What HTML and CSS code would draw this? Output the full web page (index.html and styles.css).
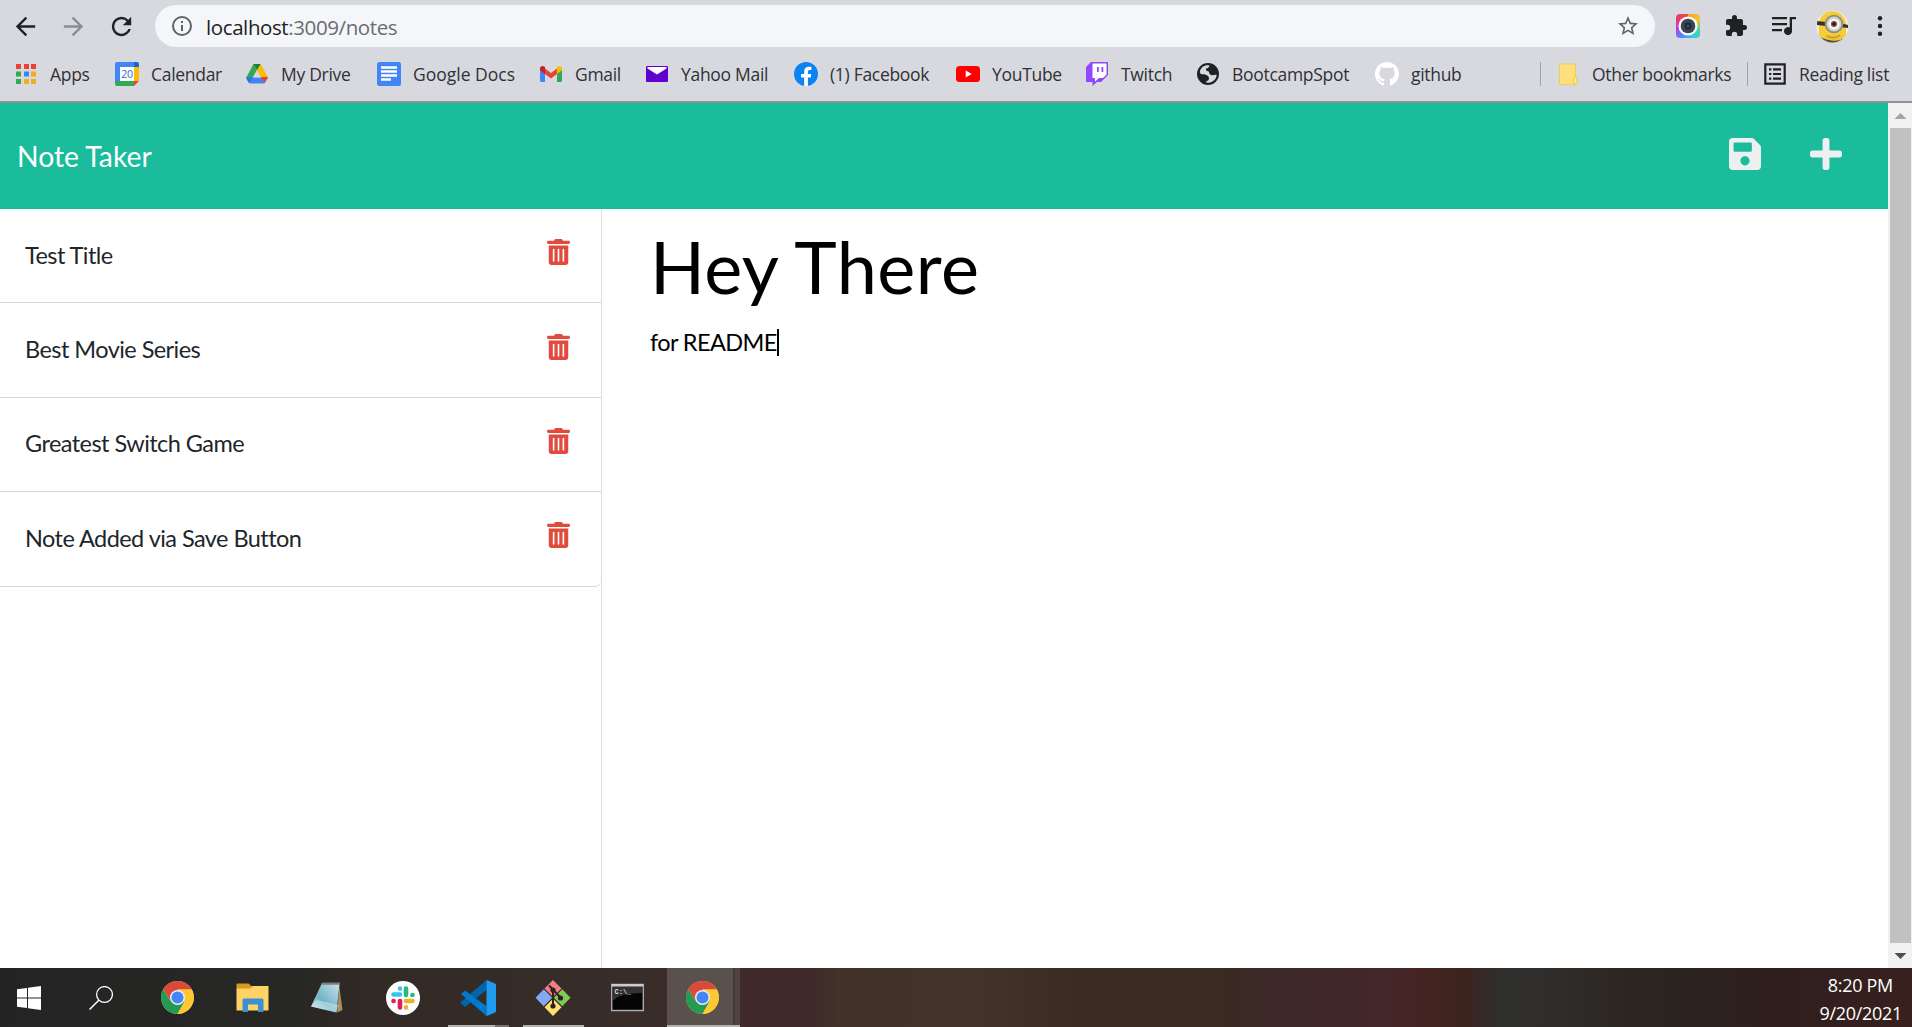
FILE: index.html
```html
<!DOCTYPE html>
<html lang="en">
<head>
<meta charset="utf-8">
<title>Note Taker</title>
<link rel="stylesheet" href="styles.css">
</head>
<body>
<svg class="defs" width="0" height="0">
  <symbol id="trash" viewBox="0 0 448 512"><path d="M32 464a48 48 0 0 0 48 48h288a48 48 0 0 0 48-48V128H32zm272-256a16 16 0 0 1 32 0v224a16 16 0 0 1-32 0zm-96 0a16 16 0 0 1 32 0v224a16 16 0 0 1-32 0zm-96 0a16 16 0 0 1 32 0v224a16 16 0 0 1-32 0zM432 32H312l-9.4-18.7A24 24 0 0 0 281.1 0H166.8a23.72 23.72 0 0 0-21.4 13.3L136 32H16A16 16 0 0 0 0 48v32a16 16 0 0 0 16 16h416a16 16 0 0 0 16-16V48a16 16 0 0 0-16-16z"/></symbol>
  <symbol id="chrome" viewBox="0 0 48 48">
    <circle cx="24" cy="24" r="24" fill="#fcc934"/>
    <path d="M24 12.5h20.9A24 24 0 0 0 3.2 12l10.8 17z" fill="#d9493c"/>
    <path d="M3.2 12A24 24 0 0 0 24 48L34.2 29.8 24 24 14 29.5z" fill="#249a54"/>
    <path d="M24 12.5h20.9A24 24 0 0 1 24 48l10.2-18.2z" fill="#fcc934"/>
    <circle cx="24" cy="24" r="11" fill="#e9edf2"/><circle cx="24" cy="24" r="8.7" fill="#4285f4"/>
  </symbol>
</svg>

<div class="toolbar">
  <svg class="nav" viewBox="0 0 24 24"><path d="M20 11H7.8l5.6-5.6L12 4l-8 8 8 8 1.4-1.4L7.8 13H20z"/></svg>
  <svg class="nav nav-off" viewBox="0 0 24 24"><path d="m12 4-1.4 1.4 5.6 5.6H4v2h12.2l-5.6 5.6L12 20l8-8z"/></svg>
  <svg class="nav" viewBox="0 0 24 24"><path d="M17.65 6.35A7.96 7.96 0 0 0 12 4a8 8 0 1 0 7.73 10h-2.08A6 6 0 1 1 12 6c1.66 0 3.14.69 4.22 1.78L13 11h7V4z"/></svg>
  <div class="omnibox">
    <svg class="info" viewBox="0 0 24 24"><path d="M11 7h2v2h-2zm0 4h2v6h-2zm1-9a10 10 0 1 0 0 20 10 10 0 0 0 0-20zm0 18a8 8 0 1 1 0-16 8 8 0 0 1 0 16z"/></svg>
    <span class="url">localhost<span class="path">:3009/notes</span></span>
    <svg class="star" viewBox="0 0 24 24"><path d="m22 9.24-7.19-.62L12 2 9.19 8.63 2 9.24l5.46 4.73L5.82 21 12 17.27 18.18 21l-1.63-7.03zM12 15.4l-3.76 2.27 1-4.28-3.32-2.88 4.38-.38L12 6.1l1.71 4.04 4.38.38-3.32 2.88 1 4.28z"/></svg>
  </div>
  <div class="rainbow"><svg viewBox="0 0 24 24" width="24" height="24"><circle cx="12" cy="12" r="9.6" fill="#fff"/><circle cx="12" cy="12" r="7.3" fill="#3d4350"/><circle cx="12" cy="12" r="3.4" fill="#1d2735"/><circle cx="12" cy="12" r="1.6" fill="#275569"/></svg></div>
  <svg class="ext puzzle" viewBox="0 0 24 24"><path d="M20.5 11H19V7a2 2 0 0 0-2-2h-4V3.5a2.5 2.5 0 0 0-5 0V5H4a2 2 0 0 0-2 2v3.8h1.5a2.7 2.7 0 0 1 0 5.4H2V20c0 1.100.9 2 2 2h3.800v-1.500a2.700 2.700 0 0 1 5.400 0V22H17a2 2 0 0 0 2-2v-4h1.500a2.500 2.500 0 0 0 0-5z"/></svg>
  <svg class="ext media" viewBox="0 0 24 20"><path d="M0 1h15v2.300H0zM0 7h15v2.300H0zM0 13h10v2.300H0zM24 1v2.300h-4V15a4 4 0 1 1-2.300-3.500V1z"/></svg>
  <svg class="avatar" viewBox="0 0 33 33">
    <defs><clipPath id="av"><circle cx="16.500" cy="16.500" r="16"/></clipPath></defs>
    <g clip-path="url(#av)"><rect width="33" height="33" fill="#f3ecd5"/><path d="M3 33V14C4 5 10 1 16 1s13 4 14 13v19z" fill="#f4cc3c"/><path d="M1 11l9 1v4l-9-1zM24 13l8 2v3l-8-1z" fill="#35312c"/><path d="M4 27c8 4 17 4 25 1l-3 5H7z" fill="#425061"/><path d="M9 25h16v5q-8 2-16-1z" fill="#eec233"/><circle cx="18" cy="14" r="9.300" fill="#8f8c87"/><circle cx="18" cy="14" r="7.600" fill="#d2cfc9"/><circle cx="18" cy="14" r="5.600" fill="#f8f5f0"/><circle cx="18" cy="14" r="3" fill="#70463a"/><circle cx="18" cy="14" r="1.300" fill="#111"/><path d="M11 26q7 4 13-1" fill="none" stroke="#b48a22"/></g>
  </svg>
  <svg class="dots" viewBox="0 0 6 20"><circle cx="3" cy="2.300" r="2.200"/><circle cx="3" cy="10" r="2.200"/><circle cx="3" cy="17.700" r="2.200"/></svg>
</div>

<div class="bookmarks">
  <div class="bm"><svg viewBox="0 0 24 24"><path d="M2 2h5v5H2zM10 2h5v5h-5zM17 2h5v5h-5z" fill="#ea4335"/><path d="M2 9.5h5v5H2zM2 17h5v5H2z" fill="#34a853"/><path d="M10 9.5h5v5h-5z" fill="#2a8cf0"/><path d="M17 9.5h5v5h-5zM10 17h5v5h-5zM17 17h5v5h-5z" fill="#f4ab1c"/></svg><span>Apps</span></div>
  <div class="bm"><svg viewBox="0 0 24 24"><path d="M2 0h17v5H5v14H0V2a2 2 0 0 1 2-2z" fill="#4285f4"/><path d="M19 0h3a2 2 0 0 1 2 2v3h-5z" fill="#1967d2"/><path d="M19 5h5v14h-5z" fill="#fbbc04"/><path d="M0 19h19v5H2a2 2 0 0 1-2-2z" fill="#34a853"/><path d="M19 19h5l-5 5z" fill="#ea4335"/><path d="M5 5h14v14H5z" fill="#fff"/><text x="12" y="16.2" class="cal">20</text></svg><span>Calendar</span></div>
  <div class="bm"><svg viewBox="0 0 24 24"><path d="M8.5 2h7L8 15l-4 6-3-5z" fill="#34a853"/><path d="M8.5 2h7L23 15h-7.2z" fill="#fbbc04"/><path d="M12 8 15.500 2h-7z" fill="#188038"/><path d="M1 15.5h22l-3 5.2q-.5.8-1.5.8h-13q-1 0-1.5-.8z" fill="#4285f4"/><path d="M15.8 15H23l-3.4 5.8z" fill="#ea4335"/><path d="M1 15.5 8.2 15l-4 6z" fill="#2d72e8"/><path d="m12 8.4 3.8 6.8H8.2z" fill="#d8d9df"/></svg><span>My Drive</span></div>
  <div class="bm wide"><svg viewBox="0 0 24 24"><rect width="24" height="24" rx="2.5" fill="#4285f4"/><path d="M4 4.300h16v2.500H4zM4 8.300h16v2.500H4zM4 12.300h16v2.500H4zM4 16.300h10v2.500H4z" fill="#fff"/></svg><span>Google Docs</span></div>
  <div class="bm"><svg viewBox="0 0 24 24"><path d="M1 6v12.5q0 1.5 1.5 1.5H6v-9z" fill="#4285f4"/><path d="M23 6v12.5q0 1.5-1.5 1.5H18v-9z" fill="#34a853"/><path d="M6 6.5 12 11l6-4.5V12l-6 4.5L6 12z" fill="#ea4335"/><path d="M1 6.5C1 4 3.600 3.200 5.200 4.500L6 5v7L1 8.300z" fill="#c5221f"/><path d="M23 6.500C23 4 20.400 3.200 18.800 4.500L18 5v7l5-3.700z" fill="#fbbc04"/></svg><span>Gmail</span></div>
  <div class="bm"><svg viewBox="0 0 24 24"><rect x="1" y="4" width="22" height="16" rx="1" fill="#6001d2"/><path d="M2.500 5h19v1.500l-9.500 6-9.500-6z" fill="#fff"/></svg><span>Yahoo Mail</span></div>
  <div class="bm"><svg viewBox="0 0 24 24"><circle cx="12" cy="12" r="12" fill="#0b84f3"/><path d="M16.700 15.500 17.200 12h-3.300V9.800c0-1 .5-1.900 2-1.900h1.500v-3s-1.400-.2-2.700-.2c-2.700 0-4.500 1.600-4.500 4.600V12H7.100v3.500h3.100v8.400a12 12 0 0 0 3.700 0v-8.400z" fill="#fff"/></svg><span>(1) Facebook</span></div>
  <div class="bm"><svg viewBox="0 0 24 24"><rect y="4" width="24" height="16" rx="3.500" fill="#f00"/><path d="M9.700 8.500v7l6-3.500z" fill="#fff"/></svg><span>YouTube</span></div>
  <div class="bm"><svg viewBox="0 0 24 24"><path d="M6 0h17v13l-7 7h-4l-4.500 4v-4H1V5z" fill="#9147ff"/><path d="M7.500 1.500h14v11L18 16h-4l-4 3.500V16H7.500z" fill="#fff"/><path d="M12 5h1.800v5H12zM16.500 5h1.800v5h-1.800z" fill="#9147ff"/></svg><span>Twitch</span></div>
  <div class="bm"><svg viewBox="0 0 24 24"><circle cx="12" cy="12" r="11" fill="#202124"/><path d="M4 9C5 5.500 8 3.200 11.500 3.200c1 0 2 .3 2 .3-.3 1.800-1.500 2.800-3.500 3-.5 1.500.2 2.500 2.200 2.800 1.300.2.600 2.500 2.300 3.500 2 1 4.500-.5 6.200.200-.3 4-4 7.700-8.200 7.800l-2.500-.3c.2-1.500 1.500-1.500 2.200-2.200 1-1 1.200-2.700-.2-4.300-1.500-1.600-4-2-6-1.800-1.500 0-2.300-1.200-2-3.200z" fill="#d8d9df"/></svg><span>BootcampSpot</span></div>
  <div class="bm"><svg viewBox="0 0 16 16"><path fill="#fff" d="M8 0C3.580 0 0 3.580 0 8c0 3.540 2.290 6.530 5.470 7.590.4.070.55-.17.55-.38 0-.19-.01-.82-.01-1.490-2.010.37-2.530-.49-2.690-.94-.09-.23-.48-.94-.82-1.130-.28-.15-.68-.52-.01-.53.63-.01 1.080.58 1.230.82.72 1.210 1.870.87 2.330.66.07-.52.28-.87.51-1.070-1.780-.2-3.640-.89-3.640-3.950 0-.87.31-1.590.82-2.150-.08-.2-.36-1.020.08-2.120 0 0 .67-.21 2.200.82.64-.18 1.320-.27 2-.27s1.360.09 2 .27c1.530-1.040 2.200-.82 2.200-.82.44 1.100.16 1.920.08 2.120.51.56.82 1.270.82 2.150 0 3.070-1.870 3.750-3.650 3.950.29.25.54.73.54 1.480 0 1.070-.01 1.930-.01 2.200 0 .21.15.46.55.38A8.010 8.010 0 0 0 16 8c0-4.420-3.580-8-8-8z"/></svg><span>github</span></div>
  <div class="bm rule other"><svg viewBox="0 0 24 24"><path d="M3.500 2h16v13l1.500 1v5.500q0 1.500-1.500 1.500l-16-.5z" fill="#fde07c" stroke="#efcb5e"/><path d="M17.500 22v-5q0-2 1.800-2t1.700 2v3q0 2-3.500 2z" fill="#fbe694" stroke="#e9c558" stroke-width=".8"/></svg><span>Other bookmarks</span></div>
  <div class="bm rule reading"><svg viewBox="0 0 24 24"><path d="M2.300 2.300h19.400v19.400H2.300z" fill="none" stroke="#202124" stroke-width="2.200"/><path d="M6 6.300h2.300v2.200H6zM10 6.300h8v2.200h-8zM6 10.900h2.300v2.200H6zM10 10.900h8v2.200h-8zM6 15.500h2.300v2.200H6zM10 15.500h8v2.200h-8z" fill="#202124"/></svg><span>Reading list</span></div>
</div>

<div class="page">
  <div class="content">
    <header class="navbar">
      <span class="brand">Note Taker</span>
      <svg class="action" viewBox="0 32 448 448"><path d="M433.941 129.941l-83.882-83.882A48 48 0 0 0 316.118 32H48C21.490 32 0 53.490 0 80v352c0 26.510 21.490 48 48 48h352c26.510 0 48-21.490 48-48V163.882a48 48 0 0 0-14.059-33.941zM224 416c-35.346 0-64-28.654-64-64 0-35.346 28.654-64 64-64s64 28.654 64 64c0 35.346-28.654 64-64 64zm96-304.520V212c0 6.627-5.373 12-12 12H76c-6.627 0-12-5.373-12-12V108c0-6.627 5.373-12 12-12h228.520c3.183 0 6.235 1.264 8.485 3.515l3.480 3.480A11.996 11.996 0 0 1 320 111.480z"/></svg>
      <svg class="action" viewBox="0 32 448 448"><path d="M416 208H272V64c0-17.670-14.330-32-32-32h-32c-17.670 0-32 14.330-32 32v144H32c-17.670 0-32 14.330-32 32v32c0 17.670 14.330 32 32 32h144v144c0 17.670 14.330 32 32 32h32c17.670 0 32-14.330 32-32V304h144c17.670 0 32-14.330 32-32v-32c0-17.670-14.330-32-32-32z"/></svg>
    </header>
    <div class="columns">
      <ul class="notes">
        <li><span>Test Title</span><svg><use href="#trash"/></svg></li>
        <li><span>Best Movie Series</span><svg><use href="#trash"/></svg></li>
        <li><span>Greatest Switch Game</span><svg><use href="#trash"/></svg></li>
        <li><span>Note Added via Save Button</span><svg><use href="#trash"/></svg></li>
      </ul>
      <main class="editor">
        <h1>Hey There</h1>
        <p>for README<i class="caret"></i></p>
      </main>
    </div>
  </div>
  <div class="scrollbar">
    <svg viewBox="0 0 24 25"><path d="M6.500 16 12.500 10l6 6z" fill="#a3a3a3"/></svg>
    <div class="thumb"></div>
    <svg viewBox="0 0 24 25"><path d="M6.500 10l6 6 6-6z" fill="#505050"/></svg>
  </div>
</div>

<footer class="taskbar">
  <div class="task"><svg class="t24" viewBox="0 0 24 24"><path d="M0 3.200 10 1.900v9.500H0zM11 1.700 24 0v11.400H11zM0 12.400h10v9.600L0 20.700zM11 12.400h13V24l-13-1.700z" fill="#fff"/></svg></div>
  <div class="task"><svg class="t24" viewBox="0 0 24 24"><circle cx="15.500" cy="8.500" r="7.900" fill="none" stroke="#fff" stroke-width="1.300"/><path d="M10 14 .5 23.500" stroke="#fff" stroke-width="1.500"/></svg></div>
  <div class="task"><svg class="t33"><use href="#chrome"/></svg></div>
  <div class="task"><svg class="t33" viewBox="0 0 33 33"><path d="M.5 8V3.500q0-1 1-1h11l3.500 3V9z" fill="#d99a1c"/><path d="M.5 7.500H14l2.500-2.500h16v24.500H.5z" fill="#fdd365"/><path d="M6.500 31V19q0-1.500 1.500-1.500h18q1.500 0 1.500 1.500v12H22v-7.500H12V31z" fill="#3b8fd4"/></svg></div>
  <div class="task"><svg class="t33" viewBox="0 0 33 33"><defs><linearGradient id="np" x1="1" y1="0" x2="0" y2="1"><stop offset="0" stop-color="#c8e4ea"/><stop offset=".6" stop-color="#72b3c6"/><stop offset="1" stop-color="#d5edf2"/></linearGradient></defs><path d="m29 3 3.500 26-5 2.500z" fill="#a88f5c"/><path d="M12 2h17.500l-3 29.500L1 25.500z" fill="url(#np)"/><path d="M1 25.500 26.500 31.500 29 24 7 19z" fill="#d9eef2" opacity=".45"/><path d="M12 1.500h18v2.300H11z" fill="#787f80"/></svg></div>
  <div class="task"><svg class="t34" viewBox="0 0 34 34"><circle cx="17" cy="17" r="17" fill="#fff"/><g stroke-width="4.600" stroke-linecap="round"><path d="M14 7.500v.1M7.500 13.500h6.500" stroke="#36c5f0"/><path d="M20 7.500v6.500M26.500 14h-.1" stroke="#2eb67d"/><path d="M14 20v6.500M7.500 20h.1" stroke="#e01e5a"/><path d="M20 20h6.500M20 26.500v-.1" stroke="#ecb22e"/></g></svg></div>
  <div class="task"><svg class="t36" viewBox="0 0 36 36"><path d="M26.500 0v10L5 27l-4-3.200q-1-1 0-2z" fill="#0065a9"/><path d="M1 13.800 5 10.500 26.500 26v10L1 14z" fill="#007acc"/><path d="m26.500 0 8.500 3.600q1 .5 1 1.500v25.800q0 1-1 1.500L26.500 36z" fill="#1f9cf0"/></svg><b class="run r1"></b></div>
  <div class="task"><svg class="t36" viewBox="0 0 36 36"><path d="m18 0 8.500 8.500L18 17 9.500 8.500z" fill="#f37f86"/><path d="m8.700 9.300 8.500 8.500-8.500 8.500-8.200-8.500z" fill="#82aaf4"/><path d="m27.300 9.300 8.200 8.500-8.200 8.500-8.500-8.500z" fill="#80c95a"/><path d="m18 18.700 8.500 8.500L18 36l-8.500-8.800z" fill="#fde173"/><path d="M14 5.500 26 18M18 9v17" stroke="#30231f" stroke-width="2"/><circle cx="18" cy="10" r="2.600" fill="#30231f"/><circle cx="25.500" cy="18" r="2.600" fill="#30231f"/><circle cx="18" cy="26" r="2.600" fill="#30231f"/></svg><b class="run r2"></b></div>
  <div class="task"><svg class="t33" viewBox="0 0 33 33"><path d="M.7 3.500h31.600v26H.7z" fill="#050505" stroke="#a9abae" stroke-width="1.400"/><path d="M1 3h31v2.600H1z" fill="#c9ccd0"/><path d="M2 6h29v6Q8 12 2 20z" fill="#333"/><text x="3.500" y="13" class="cmd">C:\_</text></svg></div>
  <div class="task active"><svg class="t33"><use href="#chrome"/></svg><b class="run r3"></b></div>
  <div class="clock"><span class="time">8:20 PM</span><span class="date">9/20/2021</span></div>
</footer>
</body>
</html>
```
FILE: styles.css
```css
* { box-sizing: border-box; }
body {
  margin: 0;
  width: 1912px;
  height: 1027px;
  overflow: hidden;
  display: flex;
  flex-direction: column;
  background: #fff;
  font-family: Lato, "Liberation Sans", sans-serif;
}
svg { display: block; flex: none; }
.defs { position: absolute; }

/* browser toolbar */
.toolbar {
  height: 52px;
  flex: none;
  display: flex;
  align-items: center;
  background: #d8d9df;
  padding-left: 11px;
}
.nav { width: 29px; height: 29px; margin-right: 19px; fill: #202124; }
.nav-off { fill: #8c8d92; }
.omnibox {
  width: 1500px;
  height: 42px;
  border-radius: 21px;
  background: #f5f6f9;
  display: flex;
  align-items: center;
  padding: 0 15px;
}
.info { width: 24px; height: 24px; fill: #5f6368; }
.url {
  flex: 1;
  margin-left: 12px;
  padding-top: 1px;
  font: 20.5px/28px "Open Sans", "Noto Sans", sans-serif;
  letter-spacing: -0.4px;
  color: #202124;
}
.path { color: #6a6d72; }
.star { width: 24px; height: 24px; fill: #5f6368; }
.rainbow {
  width: 24px; height: 24px;
  margin-left: 21px;
  border-radius: 4px;
  background: conic-gradient(#f6a21c, #f4c63a 60deg, #3fd8a0 110deg, #36c7e8 160deg, #5f7df5 220deg, #c23be0 260deg, #ea3a68 310deg, #f0502a);
}
.ext { fill: #202124; }
.puzzle { width: 24px; height: 24px; margin-left: 24px; }
.media { width: 24px; height: 20px; margin-left: 24px; }
.avatar { width: 33px; height: 33px; margin-left: 20px; }
.dots { width: 6px; height: 20px; margin-left: 28px; fill: #202124; }

/* bookmarks bar */
.bookmarks {
  height: 51px;
  flex: none;
  display: grid;
  grid-template-columns: 101px 130px 132px 162px 106px 149px 162px 129px 111px 179px 165px 207px 1fr;
  padding: 10px 0 15px 14px;
  border-bottom: 2px solid #8c9297;
  background: #d8d9df;
  font: 17.5px/24px "Open Sans", "Noto Sans", sans-serif;
  letter-spacing: -0.3px;
  color: #303136;
  white-space: nowrap;
}
.bm { display: flex; gap: 12px; align-items: center; height: 24px; }
.wide { letter-spacing: 0; }
.bm > svg { width: 24px; height: 24px; }
.rule { border-left: 1px solid #a1a2a7; }
.other { padding-left: 15px; }
.reading { padding-left: 15px; }
.cal { font: 10.5px "Open Sans", sans-serif; letter-spacing: -.3px; fill: #2a6bd8; text-anchor: middle; }

/* page */
.page { flex: 1; display: flex; min-height: 0; }
.content { width: 1888px; display: flex; flex-direction: column; }
.navbar {
  height: 106px;
  flex: none;
  display: flex;
  align-items: center;
  padding: 0 46px 0 17px;
  background: #1abc9c;
  color: #fff;
}
.brand { flex: 1; font-size: 28.3px; }
.action { width: 32px; height: 32px; fill: #ecf0f1; margin: 0 0 5px 49px; }
.columns { flex: 1; display: flex; }
.notes {
  width: 602px;
  margin: 0;
  padding: 0;
  list-style: none;
  border-right: 1px solid #dcdddf;
  color: #212529;
}
.notes li {
  height: 94.4px;
  display: flex;
  justify-content: space-between;
  align-items: center;
  padding: 0 31px 2px 25px;
  border-bottom: 1px solid #d9d9d9;
  font-size: 23.5px;
  letter-spacing: -0.55px;
}
.notes li:last-child { border-radius: 0 0 6px 0; }
.notes svg { width: 23px; height: 26px; margin-bottom: 5px; fill: #e04b3e; }
.editor { flex: 1; padding: 14px 0 0 48px; color: #000; }
.editor h1 { margin: 0; font-size: 72px; line-height: 86px; font-weight: 400; letter-spacing: .45px; }
.editor p { margin: 20px 0 0; font-size: 23.5px; line-height: 26px; letter-spacing: -.6px; display: flex; }
.caret { width: 2px; height: 27px; background: #000; }
.scrollbar { width: 24px; background: #f1f1f1; display: flex; flex-direction: column; }
.thumb { flex: 1; margin: 0 1px 0 2px; background: #c1c1c1; }

/* taskbar */
.taskbar {
  height: 59px;
  flex: none;
  display: flex;
  background: linear-gradient(90deg, #242424 0, #272725 290px, #332a25 390px, #382d29 640px, #3f2a29 740px, #3f2a29 810px, #42322a 840px, #42342a 970px, #3b2c23 1080px, #392a22 1220px, #3e2829 1300px, #44272a 1390px, #452422 1420px, #3c231e 1465px, #2f2f2d 1500px, #302e2c 1540px, #2b2520 1640px, #2f1f1c 1780px, #38201f 1912px);
}
.task { position: relative; width: 75px; display: flex; justify-content: center; align-items: center; flex: none; }
.task:first-child { width: 58px; }
.task:nth-child(2) { width: 85px; }
.task:nth-child(3) { width: 69px; }
.task:nth-child(4) { width: 81px; }
.task:nth-child(5) { width: 67px; }
.task:nth-child(6) { width: 85px; }
.task:nth-child(7) { width: 66px; }
.task:nth-child(8) { width: 84px; }
.task:nth-child(9) { width: 72px; padding-right: 8px; }
.t24 { width: 24px; height: 24px; }
.t33 { width: 33px; height: 33px; }
.t34 { width: 34px; height: 34px; }
.t36 { width: 36px; height: 36px; }
.active { width: 73px; background: linear-gradient(90deg, #5b514c 0 66px, #443a37 66px 68px, #50443f 68px); }
.active svg { margin-right: 3px; }
.run { position: absolute; bottom: 0; height: 2px; background: #b5b1ae; }
.r1 { left: 3px; width: 61px; background: linear-gradient(90deg, #b5b1ae 0 47px, #77716e 47px); }
.r2 { left: 12px; width: 61px; }
.r3 { left: 0; width: 73px; }
.cmd { font: bold 7px "Liberation Mono", monospace; fill: #ddd; }
.clock {
  flex: 1;
  display: flex;
  flex-direction: column;
  align-items: flex-end;
  padding: 3px 10px 0 0;
  font: 18px/28px "Open Sans", "Noto Sans", sans-serif;
  letter-spacing: -.3px;
  color: #fff;
}
.time { padding-right: 9px; }
```
